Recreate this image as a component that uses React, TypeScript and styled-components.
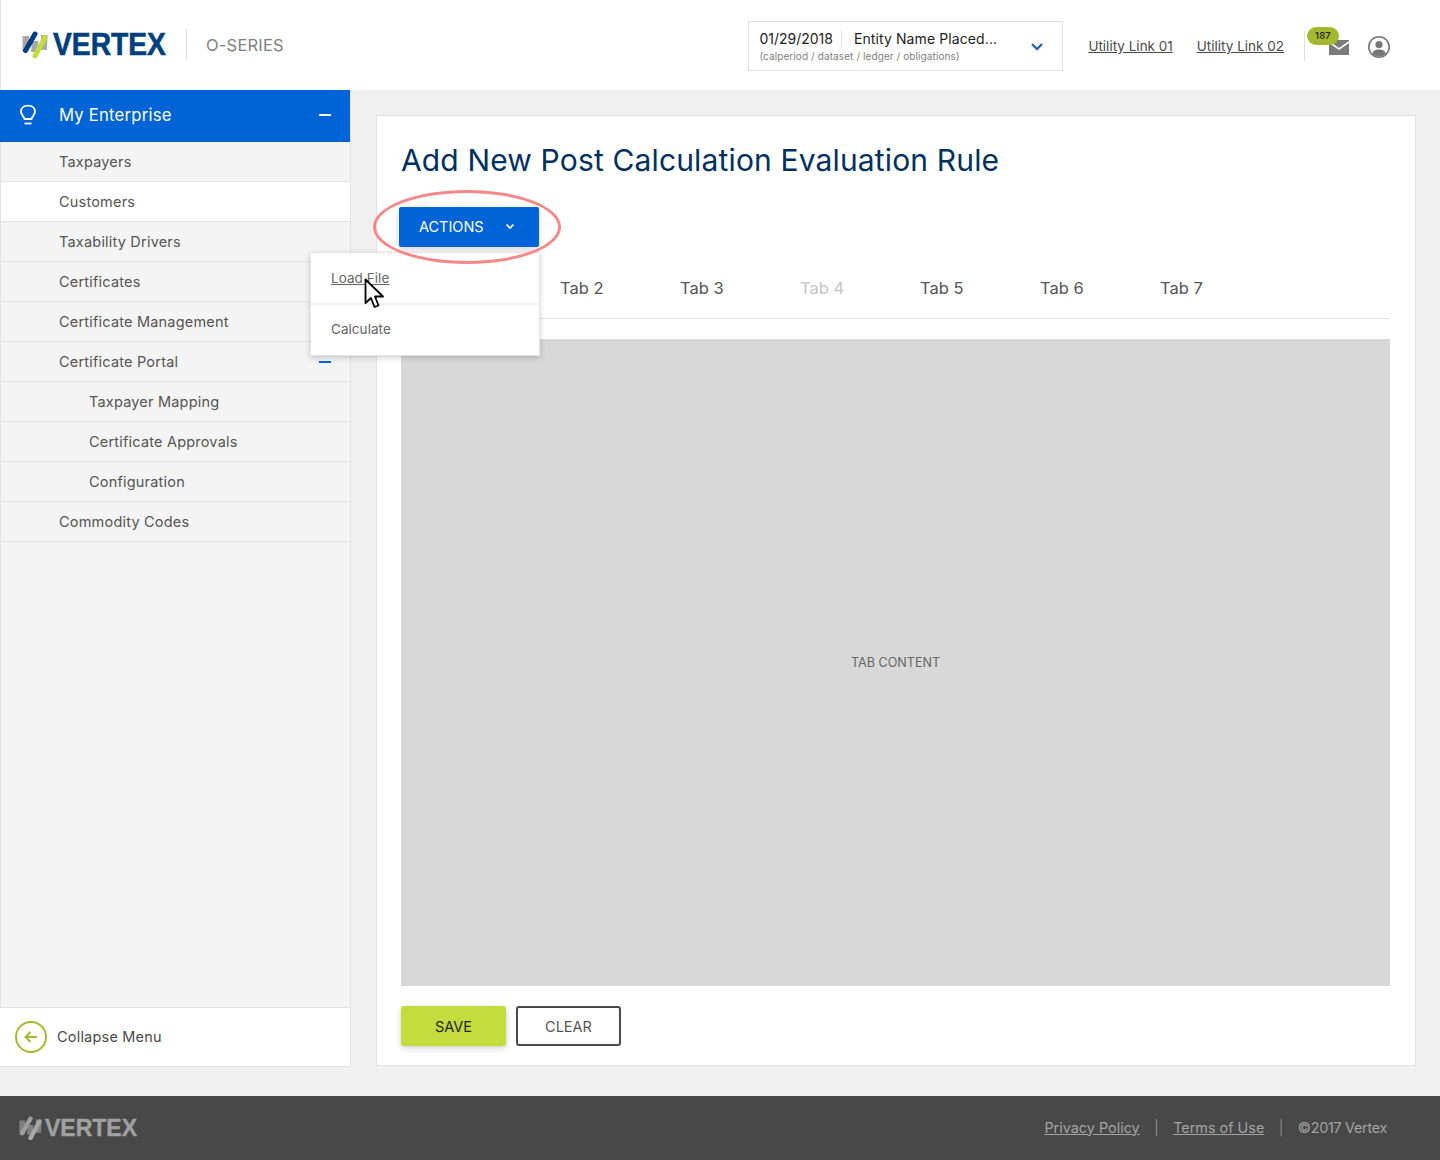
import styled, { createGlobalStyle } from 'styled-components';

const GlobalStyle = createGlobalStyle`
  html, body {
    margin: 0;
    padding: 0;
    background: #f0f0f0;
    font-family: Inter, "Open Sans", sans-serif;
    color: #4a4a4a;
  }
  * { box-sizing: border-box; }
`;

const menuItems = [
  { label: 'Taxpayers' },
  { label: 'Customers', active: true },
  { label: 'Taxability Drivers' },
  { label: 'Certificates' },
  { label: 'Certificate Management' },
  { label: 'Certificate Portal', open: true },
  { label: 'Taxpayer Mapping', child: true },
  { label: 'Certificate Approvals', child: true },
  { label: 'Configuration', child: true },
  { label: 'Commodity Codes' },
];

const tabs = [
  { label: 'Tab 1' },
  { label: 'Tab 2' },
  { label: 'Tab 3' },
  { label: 'Tab 4', disabled: true },
  { label: 'Tab 5' },
  { label: 'Tab 6' },
  { label: 'Tab 7' },
];

const LogoMark = ({ size, blue, grey, green }: { size: number; blue: string; grey: string; green: string }) => (
  <svg width={size} height={size * 1.08} viewBox="0 0 26 28" fill="none" strokeLinecap="round">
    <path d="M0.5 5 H7 L6.5 20 H0.5 Z" fill={grey} />
    <path d="M10 10 H16.5 L15 21 H9 Z" fill={grey} />
    <path d="M19 4 H25.5 L25 19 H19 Z" fill={grey} />
    <path d="M3.5 19.5 L13 3" stroke={blue} strokeWidth="5" />
    <path d="M13 25 L23 6.5" stroke={green} strokeWidth="5" />
  </svg>
);

const App = () => {
  return (
    <>
      <GlobalStyle />
      <Page>
        <Header>
          <Brand>
            <LogoMark size={26} blue="#003f7d" grey="#a9a9a9" green="#c4dc3c" />
            <Wordmark>VERTEX</Wordmark>
            <ProductName>O-SERIES</ProductName>
          </Brand>
          <HeaderRight>
            <EntityPicker>
              <EntityText>
                <EntityTop>
                  <EntityDate>01/29/2018</EntityDate>
                  <EntityName>Entity Name Placed...</EntityName>
                </EntityTop>
                <EntityPath>(calperiod / dataset / ledger / obligations)</EntityPath>
              </EntityText>
              <svg width="14" height="9" viewBox="0 0 14 9" fill="none">
                <path d="M2 2 L7 7 L12 2" stroke="#2c62b5" strokeWidth="2.4" />
              </svg>
            </EntityPicker>
            <UtilityLink>Utility Link 01</UtilityLink>
            <UtilityLink>Utility Link 02</UtilityLink>
            <IconGroup>
              <MailWrap>
                <svg width="20" height="15" viewBox="0 0 20 15">
                  <path d="M0 1 L0 0 L20 0 L20 1 L10 8 Z" fill="#7a7a7a" />
                  <path d="M0 3 L10 10 L20 3 L20 15 L0 15 Z" fill="#7a7a7a" />
                </svg>
                <Badge>187</Badge>
              </MailWrap>
              <ProfileIcon width="24" height="24" viewBox="0 0 24 24" fill="none">
                <circle cx="12" cy="12" r="10.2" stroke="#777" strokeWidth="1.6" />
                <circle cx="12" cy="9.6" r="3.6" fill="#777" />
                <path d="M5.2 18.6 C6.2 15.2 8.8 14.4 12 14.4 C15.2 14.4 17.8 15.2 18.8 18.6 C17 20.6 14.8 21.6 12 21.6 C9.2 21.6 7 20.6 5.2 18.6 Z" fill="#777" />
              </ProfileIcon>
            </IconGroup>
          </HeaderRight>
        </Header>

        <Body>
          <Sidebar>
            <SidebarTitle>
              <svg width="18" height="22" viewBox="0 0 18 22" fill="none" stroke="#fff" strokeWidth="1.8">
                <path d="M5.5 15 C5 12.5 2 11 2 7.6 C2 4 5 1.6 9 1.6 C13 1.6 16 4 16 7.6 C16 11 13 12.5 12.5 15 Z" />
                <path d="M5.5 19.5 H12.5" />
              </svg>
              <SidebarTitleText>My Enterprise</SidebarTitleText>
              <MinusBar $color="#fff" />
            </SidebarTitle>
            {menuItems.map((item) => (
              <MenuRow key={item.label} $active={item.active} $child={item.child}>
                {item.label}
                {item.open && <MinusBar $color="#0064d7" />}
              </MenuRow>
            ))}
            <SidebarFill />
            <CollapseRow>
              <CollapseIcon>
                <svg width="14" height="12" viewBox="0 0 14 12" fill="none" stroke="#a4b92f" strokeWidth="2">
                  <path d="M6.5 1 L1.5 6 L6.5 11 M1.5 6 H13" />
                </svg>
              </CollapseIcon>
              <CollapseLabel>Collapse Menu</CollapseLabel>
            </CollapseRow>
          </Sidebar>

          <Card>
            <Title>Add New Post Calculation Evaluation Rule</Title>
            <ActionsArea>
              <ActionsButton>
                ACTIONS
                <svg width="10" height="7" viewBox="0 0 10 7" fill="none">
                  <path d="M1.5 1.5 L5 5 L8.5 1.5" stroke="#fff" strokeWidth="1.7" />
                </svg>
              </ActionsButton>
              <ActionsMenu>
                <ActionsMenuItem $link>Load File</ActionsMenuItem>
                <ActionsMenuItem>Calculate</ActionsMenuItem>
                <Cursor width="22" height="31" viewBox="0 0 22 31">
                  <path d="M1.5 1.5 V25 L7 20 L10.5 29 L14.5 27.5 L11 18.5 H19 Z" fill="#fff" stroke="#000" strokeWidth="1.8" strokeLinejoin="round" />
                </Cursor>
              </ActionsMenu>
              <Highlight />
            </ActionsArea>
            <TabBar>
              {tabs.map((tab) => (
                <Tab key={tab.label} $disabled={tab.disabled}>{tab.label}</Tab>
              ))}
            </TabBar>
            <TabContent>TAB CONTENT</TabContent>
            <ButtonRow>
              <SaveButton>SAVE</SaveButton>
              <ClearButton>CLEAR</ClearButton>
            </ButtonRow>
          </Card>
        </Body>

        <Footer>
          <FooterBrand>
            <LogoMark size={23} blue="#9c9c9c" grey="#808080" green="#a6a6a6" />
            <FooterWordmark>VERTEX</FooterWordmark>
          </FooterBrand>
          <FooterLinks>
            <FooterLink>Privacy Policy</FooterLink>
            <FooterPipe>|</FooterPipe>
            <FooterLink>Terms of Use</FooterLink>
            <FooterPipe>|</FooterPipe>
            <Copyright>©2017 Vertex</Copyright>
          </FooterLinks>
        </Footer>
      </Page>
    </>
  );
};

export default App;

const Page = styled.div`
  width: 1440px;
  height: 1160px;
  display: flex;
  flex-direction: column;
  letter-spacing: 0.2px;
`;

const Header = styled.header`
  height: 90px;
  background: #fff;
  border-left: 1px solid #e2e2e2;
  display: flex;
  align-items: center;
  justify-content: space-between;
  padding: 0 49px 0 21px;
`;

const Brand = styled.div`
  display: flex;
  align-items: center;
`;

const Wordmark = styled.span`
  width: 113px;
  margin-left: 5px;
  font-family: "Liberation Sans", sans-serif;
  font-weight: 700;
  font-size: 31px;
  letter-spacing: 0;
  color: #003f7d;
  -webkit-text-stroke: 0.6px #003f7d;
  transform: scaleX(0.91);
  transform-origin: left center;
`;

const ProductName = styled.span`
  margin-left: 20px;
  padding-left: 19px;
  height: 30px;
  line-height: 30px;
  border-left: 1px solid #ddd;
  font-size: 16.5px;
  letter-spacing: 0.2px;
  color: #808080;
`;

const HeaderRight = styled.div`
  display: flex;
  align-items: center;
  margin-top: 2px;
`;

const EntityPicker = styled.div`
  width: 315px;
  height: 50px;
  border: 1px solid #e0e0e0;
  display: flex;
  align-items: center;
  justify-content: space-between;
  padding: 0 18px 0 10px;
`;

const EntityText = styled.div`
  display: flex;
  flex-direction: column;
  gap: 2px;
`;

const EntityTop = styled.div`
  display: flex;
  align-items: center;
  font-size: 14px;
  line-height: 18px;
  color: #222;
`;

const EntityDate = styled.span`
  padding-right: 8px;
  margin-right: 12px;
  border-right: 1px solid #e0e0e0;
  letter-spacing: 0;
`;

const EntityName = styled.span`
  letter-spacing: 0.1px;
`;

const EntityPath = styled.div`
  font-size: 10px;
  line-height: 12px;
  color: #808080;
  letter-spacing: 0.1px;
`;

const UtilityLink = styled.a`
  margin-left: 24px;
  font-size: 13.5px;
  letter-spacing: 0;
  color: #4a4a4a;
  text-decoration: underline;
  &:first-of-type { margin-left: 25px; }
`;

const IconGroup = styled.div`
  margin-left: 20px;
  height: 30px;
  padding-left: 24px;
  border-left: 1px solid #ddd;
  display: flex;
  align-items: center;
  gap: 18px;
`;

const MailWrap = styled.div`
  position: relative;
  width: 20px;
  height: 15px;
  margin-top: 2px;
  display: flex;
`;

const ProfileIcon = styled.svg`
  margin-top: 2px;
`;

const Badge = styled.span`
  position: absolute;
  top: -13px;
  left: -22px;
  width: 32px;
  height: 18px;
  border-radius: 9px;
  background: #a4b92f;
  color: #1c1c1c;
  font-size: 9.5px;
  font-weight: 500;
  line-height: 18px;
  text-align: center;
`;

const Body = styled.div`
  flex: 1;
  display: flex;
  align-items: stretch;
  padding-bottom: 30px;
`;

const Sidebar = styled.aside`
  width: 351px;
  margin-bottom: -1px;
  background: #f4f4f4;
  border-left: 1px solid #e2e2e2;
  border-right: 1px solid #e2e2e2;
  border-bottom: 1px solid #e2e2e2;
  display: flex;
  flex-direction: column;
`;

const SidebarTitle = styled.div`
  height: 52px;
  margin-left: -1px;
  padding: 0 19px 2px 19px;
  background: #0064d7;
  color: #fff;
  display: flex;
  align-items: center;
`;

const SidebarTitleText = styled.span`
  flex: 1;
  margin-left: 22px;
  font-size: 16.7px;
  font-weight: 400;
`;

const MinusBar = styled.span<{ $color: string }>`
  width: 12px;
  height: 2px;
  background: ${(p) => p.$color};
`;

const MenuRow = styled.div<{ $active?: boolean; $child?: boolean }>`
  height: 40px;
  padding: 0 19px 0 ${(p) => (p.$child ? 88 : 58)}px;
  background: ${(p) => (p.$active ? '#fff' : 'transparent')};
  border-bottom: 1px solid #e2e2e2;
  color: #555;
  font-size: 14.5px;
  display: flex;
  align-items: center;
  justify-content: space-between;
`;

const SidebarFill = styled.div`
  flex: 1;
`;

const CollapseRow = styled.div`
  height: 59px;
  margin-left: -1px;
  background: #fff;
  border-top: 1px solid #e2e2e2;
  padding-left: 15px;
  display: flex;
  align-items: center;
  gap: 10px;
  color: #4a4a4a;
  font-size: 14.5px;
`;

const CollapseLabel = styled.span`
  margin-top: -2px;
`;

const CollapseIcon = styled.span`
  width: 32px;
  height: 32px;
  border: 2px solid #a4b92f;
  border-radius: 50%;
  display: flex;
  align-items: center;
  justify-content: center;
`;

const Card = styled.main`
  width: 1040px;
  margin: 25px 0 0 25px;
  padding: 0 25px 0 24px;
  background: #fff;
  border: 1px solid #e2e2e2;
  display: flex;
  flex-direction: column;
`;

const Title = styled.h1`
  margin: 25px 0 0;
  font-size: 30px;
  line-height: 38px;
  font-weight: 400;
  letter-spacing: 0.15px;
  color: #00305f;
`;

const ActionsArea = styled.div`
  position: relative;
  margin: 28px 0 0 -2px;
  height: 40px;
`;

const ActionsButton = styled.button`
  width: 140px;
  height: 40px;
  padding: 0 24px 1px 20px;
  border: 0;
  border-radius: 2px;
  background: #0064d7;
  color: #fff;
  font: inherit;
  font-size: 14.5px;
  letter-spacing: 0;
  box-shadow: 0 2px 6px rgba(0, 0, 0, 0.18);
  display: flex;
  align-items: center;
  justify-content: space-between;
`;

const Highlight = styled.div`
  position: absolute;
  left: -26px;
  top: -17px;
  width: 188px;
  height: 74px;
  border: 3px solid #f58787;
  border-radius: 50%;
  pointer-events: none;
`;

const ActionsMenu = styled.div`
  position: absolute;
  left: -89px;
  top: 45px;
  width: 230px;
  height: 104px;
  background: #fff;
  border: 1px solid #e4e4e4;
  box-shadow: 0 2px 6px rgba(0, 0, 0, 0.18);
`;

const ActionsMenuItem = styled.div<{ $link?: boolean }>`
  height: ${(p) => (p.$link ? 52 : 50)}px;
  padding: ${(p) => (p.$link ? '16px' : '15px')} 20px 0;
  border-bottom: ${(p) => (p.$link ? '2px solid #f0f0f0' : 'none')};
  font-size: 13.5px;
  letter-spacing: 0.05px;
  line-height: 18px;
  color: #666;
  text-decoration: ${(p) => (p.$link ? 'underline' : 'none')};
`;

const Cursor = styled.svg`
  position: absolute;
  left: 53px;
  top: 25px;
`;

const TabBar = styled.div`
  height: 72px;
  padding-top: 10px;
  border-bottom: 1px solid #e2e2e2;
  display: flex;
  align-items: center;
`;

const Tab = styled.div<{ $disabled?: boolean }>`
  width: 120px;
  padding-left: 39px;
  font-size: 16.5px;
  letter-spacing: 0;
  color: ${(p) => (p.$disabled ? '#c4c4c4' : '#555')};
`;

const TabContent = styled.div`
  margin-top: 20px;
  height: 647px;
  background: #d8d8d8;
  display: flex;
  align-items: center;
  justify-content: center;
  font-size: 12.6px;
  color: #666;
  letter-spacing: 0;
`;

const ButtonRow = styled.div`
  margin-top: 20px;
  display: flex;
  gap: 10px;
`;

const SaveButton = styled.button`
  width: 105px;
  height: 40px;
  border: 0;
  border-radius: 3px;
  background: #c4dc3c;
  color: #222;
  font: inherit;
  font-size: 14.5px;
  box-shadow: 0 2px 6px rgba(0, 0, 0, 0.2);
`;

const ClearButton = styled.button`
  width: 105px;
  height: 40px;
  border: 2px solid #4a4a4a;
  border-radius: 3px;
  background: #fff;
  color: #555;
  font: inherit;
  font-size: 14.5px;
`;

const Footer = styled.footer`
  height: 64px;
  background: #484848;
  display: flex;
  align-items: center;
  justify-content: space-between;
  padding: 0 53px 0 19px;
`;

const FooterBrand = styled.div`
  display: flex;
  align-items: center;
`;

const FooterWordmark = styled.span`
  font-family: "Liberation Sans", sans-serif;
  font-weight: 700;
  font-size: 23px;
  letter-spacing: 0;
  color: #a0a0a0;
  -webkit-text-stroke: 0.4px #a0a0a0;
  margin-left: 3px;
`;

const FooterLinks = styled.div`
  margin-top: -2px;
  display: flex;
  gap: 14.5px;
  font-size: 14.4px;
  letter-spacing: 0;
  color: #a3a3a3;
`;

const FooterLink = styled.a`
  text-decoration: underline;
`;

const FooterPipe = styled.span`
  font-weight: 300;
  color: #9a9a9a;
`;

const Copyright = styled.span`
  letter-spacing: -0.3px;
`;
